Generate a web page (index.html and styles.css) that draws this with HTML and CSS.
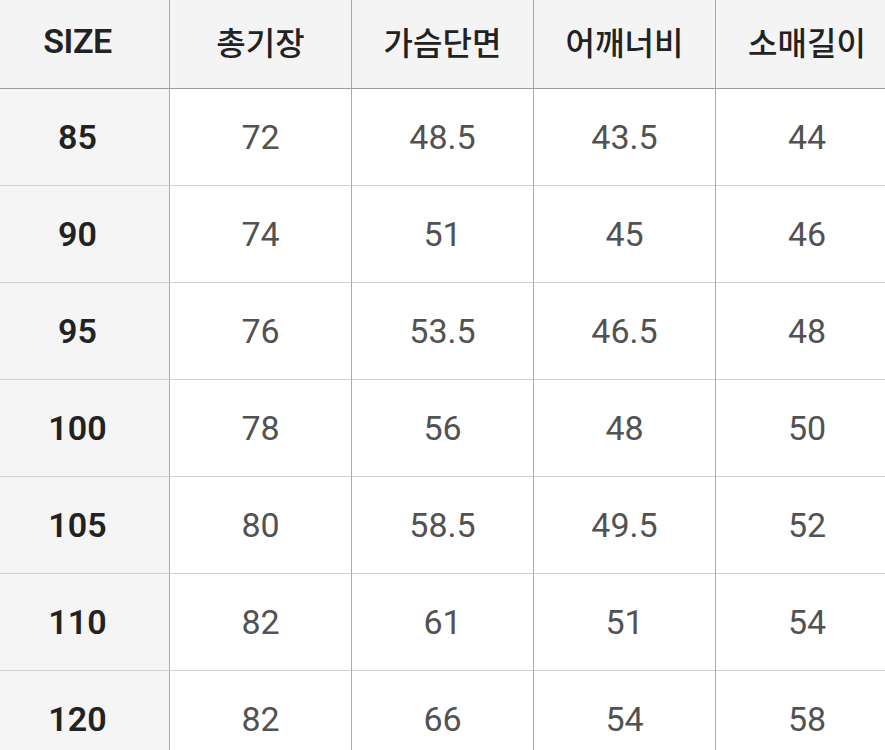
FILE: index.html
```html
<!DOCTYPE html>
<html lang="ko">
<head>
<meta charset="utf-8">
<title>Size chart</title>
<link rel="stylesheet" href="styles.css">
</head>
<body>
<div class="chart">
  <div class="cell head first en">SIZE</div>
  <div class="cell head">총기장</div>
  <div class="cell head">가슴단면</div>
  <div class="cell head">어깨너비</div>
  <div class="cell head last">소매길이</div>

  <div class="cell size">85</div><div class="cell val">72</div><div class="cell val">48.5</div><div class="cell val">43.5</div><div class="cell val last">44</div>
  <div class="cell size">90</div><div class="cell val">74</div><div class="cell val">51</div><div class="cell val">45</div><div class="cell val last">46</div>
  <div class="cell size">95</div><div class="cell val">76</div><div class="cell val">53.5</div><div class="cell val">46.5</div><div class="cell val last">48</div>
  <div class="cell size">100</div><div class="cell val">78</div><div class="cell val">56</div><div class="cell val">48</div><div class="cell val last">50</div>
  <div class="cell size">105</div><div class="cell val">80</div><div class="cell val">58.5</div><div class="cell val">49.5</div><div class="cell val last">52</div>
  <div class="cell size">110</div><div class="cell val">82</div><div class="cell val">61</div><div class="cell val">51</div><div class="cell val last">54</div>
  <div class="cell size">120</div><div class="cell val">82</div><div class="cell val">66</div><div class="cell val">54</div><div class="cell val last">58</div>
</div>
</body>
</html>
```
FILE: styles.css
```css
html, body {
  margin: 0;
  padding: 0;
  background: #ffffff;
  overflow: hidden;
  width: 885px;
  height: 750px;
}
.chart {
  display: grid;
  grid-template-columns: 170px 182px 182px 182px 182px;
  grid-template-rows: 89px repeat(7, 97px);
  width: 898px;
}
.cell {
  box-sizing: border-box;
  display: flex;
  align-items: center;
  justify-content: center;
  border-right: 1px solid #a9a9a9;
  border-bottom: 1px solid #d0d0d0;
  font-family: Roboto, "Noto Sans CJK KR", sans-serif;
}
.cell.last {
  border-right: none;
}
.head {
  background: #f4f4f4;
  border-bottom-color: #9c9c9c;
  font-family: "Noto Sans CJK KR", sans-serif;
  font-size: 32px;
  font-weight: 500;
  color: #222222;
  padding-bottom: 7px;
}
.head.first,
.size {
  padding-right: 14px;
}
.head.en {
  font-family: Roboto, "Noto Sans CJK KR", sans-serif;
  font-size: 34px;
  font-weight: 600;
  letter-spacing: -0.5px;
}
.size {
  background: #f5f5f5;
  font-size: 34px;
  font-weight: 600;
  color: #222222;
}
.val {
  font-size: 34px;
  font-weight: 400;
  color: #525252;
}
```
